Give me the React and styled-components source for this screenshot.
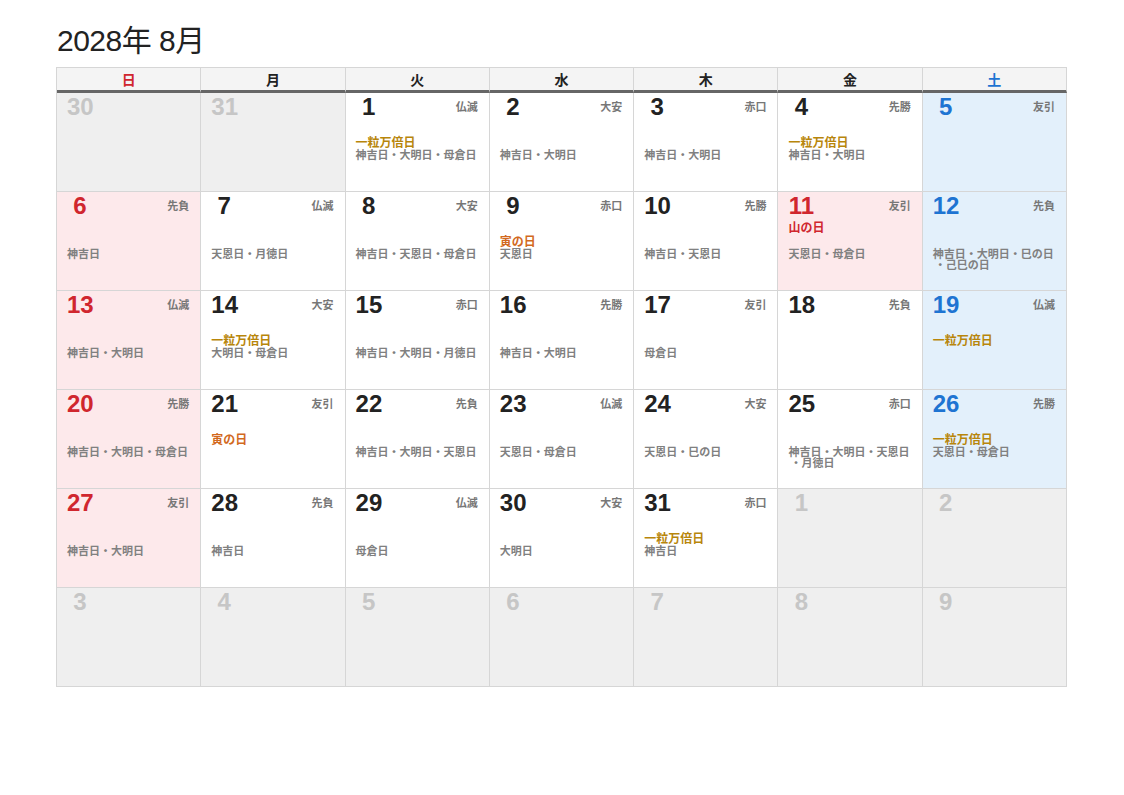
import React from "react";
import styled, { createGlobalStyle } from "styled-components";

const G = createGlobalStyle`
  body{margin:0;background:#fff;font-family:"Liberation Sans","Noto Sans CJK JP",sans-serif;}
`;
const Page = styled.div`padding:22px 57px 0 56px;width:1011px;`;
const Title = styled.h1`margin:0 0 7px 1px;font-size:30px;font-weight:400;color:#222;line-height:38px;
  font-family:"Liberation Sans","Noto Sans CJK JP",sans-serif;letter-spacing:-0.5px;`;
const Grid = styled.div`display:grid;grid-template-columns:repeat(7,1fr);border-left:1px solid #d6d6d6;border-top:1px solid #d6d6d6;`;
const Head = styled.div`height:22px;background:#f4f4f4;border-right:1px solid #d6d6d6;border-bottom:3px solid #666;
  text-align:center;font:bold 14px/22px "Noto Sans CJK JP",sans-serif;color:${p=>p.c};`;
const Cell = styled.div`height:99px;border-right:1px solid #d6d6d6;border-bottom:1px solid #d6d6d6;background:${p=>p.bg};
  padding:0 11px 0 10px;box-sizing:border-box;display:flex;flex-direction:column;`;
const Top = styled.div`height:28px;display:flex;justify-content:space-between;align-items:center;`;
const Num = styled.div`min-width:26px;text-align:center;font:bold 24px/26px "Liberation Sans",sans-serif;color:${p=>p.c};`;
const Roku = styled.div`font:bold 11px "Noto Sans CJK JP",sans-serif;color:#777;margin-top:-2px;`;
const Line = styled.div`height:14px;font:bold 12px/14px "Noto Sans CJK JP",sans-serif;color:${p=>p.c};white-space:nowrap;`;
const Notes = styled.div`font:bold 11px/11px "Noto Sans CJK JP",sans-serif;color:#808080;margin-top:0;`;
const NoteLine = styled.div`padding-left:${p=>p.indent?"2px":"0"};white-space:nowrap;`;

const data = {
 1:["仏滅","","一粒万倍日","神吉日・大明日・母倉日"],2:["大安","","","神吉日・大明日"],3:["赤口","","","神吉日・大明日"],
 4:["先勝","","一粒万倍日","神吉日・大明日"],5:["友引","","",""],6:["先負","","","神吉日"],7:["仏滅","","","天恩日・月徳日"],
 8:["大安","","","神吉日・天恩日・母倉日"],9:["赤口","","寅の日","天恩日"],10:["先勝","","","神吉日・天恩日"],
 11:["友引","山の日","","天恩日・母倉日"],12:["先負","","","神吉日・大明日・巳の日\n・己巳の日"],13:["仏滅","","","神吉日・大明日"],
 14:["大安","","一粒万倍日","大明日・母倉日"],15:["赤口","","","神吉日・大明日・月徳日"],16:["先勝","","","神吉日・大明日"],
 17:["友引","","","母倉日"],18:["先負","","",""],19:["仏滅","","一粒万倍日",""],20:["先勝","","","神吉日・大明日・母倉日"],
 21:["友引","","寅の日",""],22:["先負","","","神吉日・大明日・天恩日"],23:["仏滅","","","天恩日・母倉日"],24:["大安","","","天恩日・巳の日"],
 25:["赤口","","","神吉日・大明日・天恩日\n・月徳日"],26:["先勝","","一粒万倍日","天恩日・母倉日"],27:["友引","","","神吉日・大明日"],
 28:["先負","","","神吉日"],29:["仏滅","","","母倉日"],30:["大安","","","大明日"],31:["赤口","","一粒万倍日","神吉日"],
};
const days=[[30,0],[31,0]];
for(let i=1;i<=31;i++)days.push([i,1]);
for(let i=1;i<=9;i++)days.push([i,0]);

export default function App(){
  const heads=[["日","#d0262e"],["月","#222"],["火","#222"],["水","#222"],["木","#222"],["金","#222"],["土","#1e74d2"]];
  return <><G/><Page><Title>2028年 8月</Title><Grid>
    {heads.map(([h,c])=><Head key={h} c={c}>{h}</Head>)}
    {days.map(([d,cur],i)=>{
      const col=i%7; const info=cur?data[d]:null;
      const hol=info&&info[1];
      const bg=!cur?"#efefef":(col===0||hol)?"#fde9eb":col===6?"#e3f0fb":"#fff";
      const nc=!cur?"#c6c6c6":(col===0||hol)?"#d0262e":col===6?"#1e74d2":"#222";
      const lc=info&&info[2]==="寅の日"?"#d2691e":"#b8860b";
      return <Cell key={i} bg={bg}>
        <Top><Num c={nc}>{d}</Num>{info&&<Roku>{info[0]}</Roku>}</Top>
        <Line c="#d0262e">{hol}</Line>
        <Line c={lc}>{info&&info[2]}</Line>
        <Notes>{info&&info[3].split("\n").map((s,j)=><NoteLine key={j} indent={j>0}>{s}</NoteLine>)}</Notes>
      </Cell>;
    })}
  </Grid></Page></>;
}
